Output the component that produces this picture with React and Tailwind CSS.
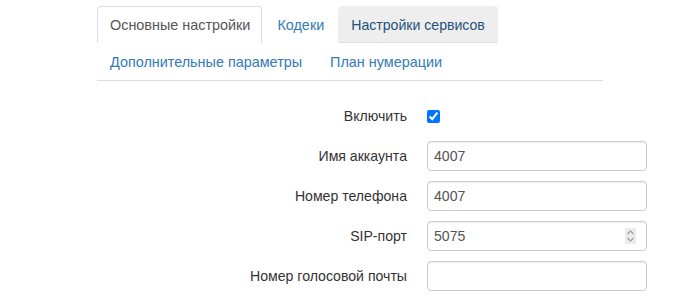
export default function App() {
  const rows = [
    { label: 'Имя аккаунта', value: '4007' },
    { label: 'Номер телефона', value: '4007' },
    { label: 'SIP-порт', value: '5075', spin: true },
    { label: 'Номер голосовой почты', value: '' },
  ]

  return (
    <div className="min-h-screen bg-white pt-[6px] text-[14.4px] leading-[20px] text-[#333]" style={{ fontFamily: '"Liberation Sans", Arial, sans-serif' }}>
      <div className="ml-[97px] w-[506px]">
        <ul className="flex flex-wrap border-b border-[#ddd]">
          <li className="mr-[2px]">
            <a className="block h-[37px] rounded-t-[4px] border border-b-0 border-[#ddd] bg-white pl-[12px] pr-[11px] pt-[8px] text-[#555]">Основные настройки</a>
          </li>
          <li className="mr-[2px]">
            <a className="block h-[37px] border border-transparent pl-[12px] pr-[11px] pt-[8px] text-[#337ab7]">Кодеки</a>
          </li>
          <li className="mr-[2px]">
            <a className="block h-[37px] rounded-t-[4px] border border-[#eee] border-b-[#ddd] bg-[#eee] px-[12px] pt-[8px] text-[14.1px] text-[#23527c]">Настройки сервисов</a>
          </li>
          <li className="mr-[2px]">
            <a className="block h-[37px] border border-transparent px-[12px] pt-[8px] text-[#337ab7]">Дополнительные параметры</a>
          </li>
          <li className="mr-[2px]">
            <a className="block h-[37px] border border-transparent px-[12px] pt-[8px] text-[#337ab7]">План нумерации</a>
          </li>
        </ul>
      </div>

      <div className="mt-[15px] ml-[97px] text-[14.1px]">
        <div className="flex h-[40px] items-center">
          <label className="w-[310px] text-right">Включить</label>
          <div className="ml-[20px] flex items-center">
            <input type="checkbox" defaultChecked className="m-0 h-[13px] w-[13px] accent-[#0075ff]" />
          </div>
        </div>
        {rows.map((r) => (
          <div key={r.label} className="flex h-[40px] items-center">
            <label className="w-[310px] text-right">{r.label}</label>
            <div className="relative ml-[20px] w-[220px]">
              <input
                type="text"
                defaultValue={r.value}
                className="block h-[30px] w-full rounded-[4px] border border-[#ccc] px-[6px] text-[14.1px] text-[#555] shadow-[inset_0_1px_1px_rgba(0,0,0,0.075)] outline-none"
              />
              {r.spin && (
                <div className="absolute right-[11px] top-[7px] flex h-[16px] w-[11px] flex-col items-center justify-center bg-[#ececec]">
                  <svg width="9" height="14" viewBox="0 0 9 14" fill="none" stroke="#9a9a9a" strokeWidth="1.1">
                    <path d="M1.5 5 L4.5 2 L7.5 5" />
                    <path d="M1.5 9 L4.5 12 L7.5 9" />
                  </svg>
                </div>
              )}
            </div>
          </div>
        ))}
      </div>
    </div>
  )
}
